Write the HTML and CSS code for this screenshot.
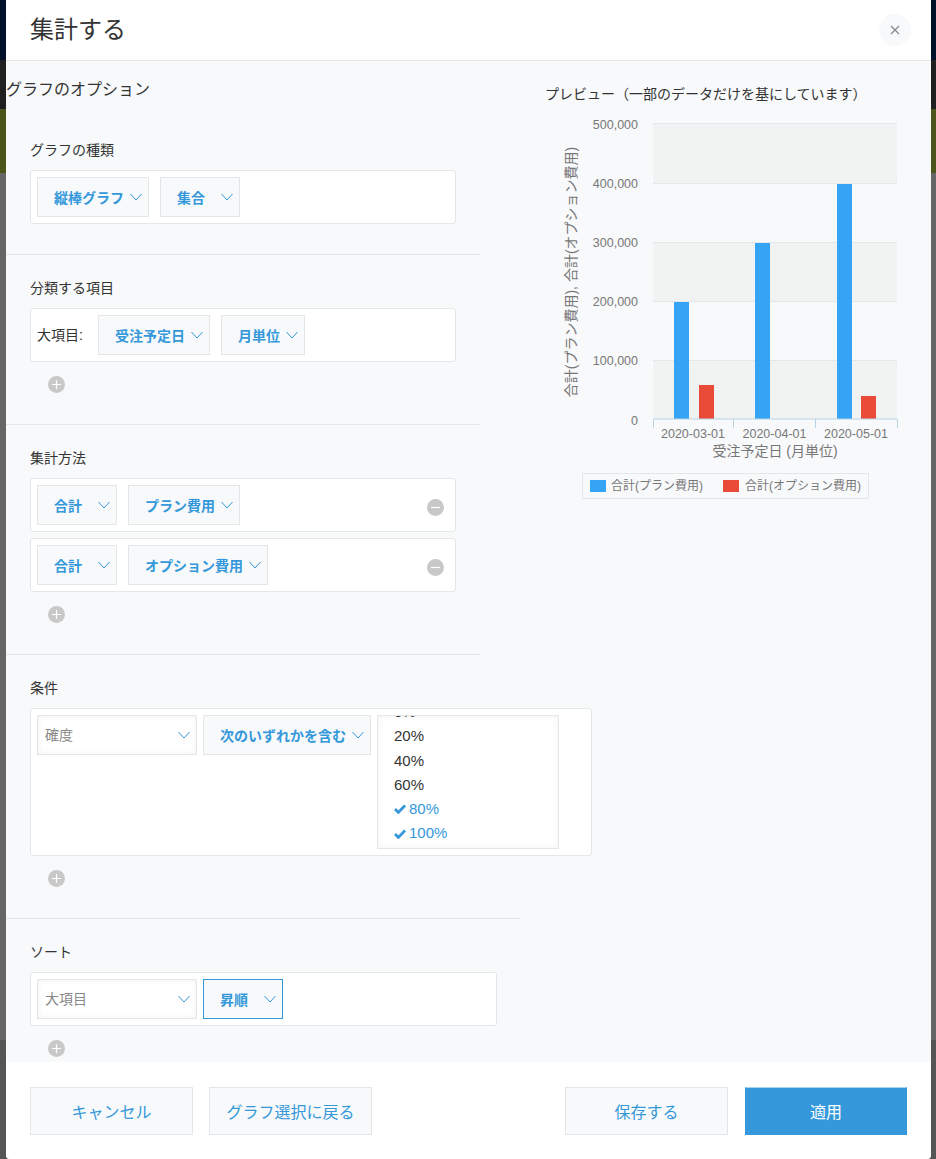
FILE: index.html
```html
<!DOCTYPE html>
<html lang="ja">
<head>
<meta charset="utf-8">
<title>集計する</title>
<link rel="stylesheet" href="styles.css">
</head>
<body>
<svg class="defs" width="0" height="0" aria-hidden="true">
  <symbol id="chev" viewBox="0 0 12 8"><polyline points="0.5,1 6,7 11.5,1" fill="none" stroke="#3498db" stroke-width="1"/></symbol>
  <symbol id="plus" viewBox="0 0 17 17"><circle cx="8.5" cy="8.5" r="8.5" fill="#c8c8c8"/><path d="M8.5 4v9M4 8.5h9" stroke="#fff" stroke-width="1.2"/></symbol>
  <symbol id="minus" viewBox="0 0 17 17"><circle cx="8.5" cy="8.5" r="8.5" fill="#c8c8c8"/><path d="M4 8.5h9" stroke="#fff" stroke-width="1.2"/></symbol>
  <symbol id="check" viewBox="0 0 12 10"><path d="M1 5 4.4 8.4 11 1.4" fill="none" stroke="#3498db" stroke-width="2.8"/></symbol>
</svg>
<div class="modal">
  <header class="head">
    <h1 class="head-title">集計する</h1>
    <button class="close" type="button"><svg width="10" height="10" viewBox="0 0 10 10"><path d="M1 1l8 8M9 1l-8 8" stroke="#888" stroke-width="1.2"/></svg></button>
  </header>
  <main class="body">
    <div class="options">
      <h2 class="options-title">グラフのオプション</h2>

      <section class="section">
        <h3 class="label">グラフの種類</h3>
        <div class="panel">
          <div class="sel"><span>縦棒グラフ</span><svg class="chev"><use href="#chev"/></svg></div>
          <div class="sel"><span>集合</span><svg class="chev"><use href="#chev"/></svg></div>
        </div>
      </section>

      <section class="section">
        <h3 class="label">分類する項目</h3>
        <div class="panel">
          <span class="field-label">大項目:</span>
          <div class="sel"><span>受注予定日</span><svg class="chev"><use href="#chev"/></svg></div>
          <div class="sel"><span>月単位</span><svg class="chev"><use href="#chev"/></svg></div>
        </div>
        <svg class="round add"><use href="#plus"/></svg>
      </section>

      <section class="section">
        <h3 class="label">集計方法</h3>
        <div class="panel">
          <div class="sel"><span>合計</span><svg class="chev"><use href="#chev"/></svg></div>
          <div class="sel"><span>プラン費用</span><svg class="chev"><use href="#chev"/></svg></div>
          <svg class="round remove"><use href="#minus"/></svg>
        </div>
        <div class="panel panel-next">
          <div class="sel"><span>合計</span><svg class="chev"><use href="#chev"/></svg></div>
          <div class="sel"><span>オプション費用</span><svg class="chev"><use href="#chev"/></svg></div>
          <svg class="round remove"><use href="#minus"/></svg>
        </div>
        <svg class="round add"><use href="#plus"/></svg>
      </section>

      <section class="section section-wide">
        <h3 class="label">条件</h3>
        <div class="panel panel-cond">
          <div class="sel sel-plain"><span>確度</span><svg class="chev"><use href="#chev"/></svg></div>
          <div class="sel"><span>次のいずれかを含む</span><svg class="chev"><use href="#chev"/></svg></div>
          <div class="listbox">
            <ul class="list">
              <li>0%</li>
              <li>20%</li>
              <li>40%</li>
              <li>60%</li>
              <li class="on"><svg class="check"><use href="#check"/></svg>80%</li>
              <li class="on"><svg class="check"><use href="#check"/></svg>100%</li>
            </ul>
          </div>
        </div>
        <svg class="round add"><use href="#plus"/></svg>
      </section>

      <section class="section section-wide section-last">
        <h3 class="label">ソート</h3>
        <div class="panel panel-sort">
          <div class="sel sel-plain"><span>大項目</span><svg class="chev"><use href="#chev"/></svg></div>
          <div class="sel sel-focus"><span>昇順</span><svg class="chev"><use href="#chev"/></svg></div>
        </div>
        <svg class="round add"><use href="#plus"/></svg>
      </section>
    </div>

    <aside class="preview">
      <h2 class="preview-title">プレビュー（一部のデータだけを基にしています）</h2>
      <svg class="chart" width="380" height="400" viewBox="545 110 380 400">
        <defs>
          <pattern id="dots" width="8" height="8" patternUnits="userSpaceOnUse"><rect x="3" y="3" width="1" height="1" fill="#e9ebea"/></pattern>
        </defs>
        <rect class="band" x="653" y="123" width="244" height="60"/>
        <rect class="band" x="653" y="242" width="244" height="60"/>
        <rect class="band" x="653" y="360" width="244" height="59"/>
        <rect x="653" y="123" width="244" height="60" fill="url(#dots)"/>
        <rect x="653" y="242" width="244" height="60" fill="url(#dots)"/>
        <rect x="653" y="360" width="244" height="59" fill="url(#dots)"/>
        <g class="grid">
          <path d="M653 123.5H897M653 183.5H897M653 242.5H897M653 301.5H897M653 360.5H897"/>
        </g>
        <rect class="bar-blue" x="674" y="302" width="15" height="117"/>
        <rect class="bar-red" x="699" y="385" width="15" height="34"/>
        <rect class="bar-blue" x="755" y="243" width="15" height="176"/>
        <rect class="bar-blue" x="837" y="184" width="15" height="235"/>
        <rect class="bar-red" x="861" y="396" width="15" height="23"/>
        <path class="ticks" d="M653 419H897M653.5 419v9M733.5 419v9M815.5 419v9M897.5 419v9"/>
        <g class="ylab">
          <text x="638" y="129">500,000</text>
          <text x="638" y="188">400,000</text>
          <text x="638" y="247">300,000</text>
          <text x="638" y="306">200,000</text>
          <text x="638" y="365">100,000</text>
          <text x="638" y="425">0</text>
        </g>
        <g class="xlab">
          <text x="693" y="438">2020-03-01</text>
          <text x="774.5" y="438">2020-04-01</text>
          <text x="856" y="438">2020-05-01</text>
        </g>
        <text class="xtitle" x="775" y="456">受注予定日 (月単位)</text>
        <text class="xtitle" transform="translate(576 272) rotate(-90)">合計(プラン費用), 合計(オプション費用)</text>
        <rect class="legend" x="582.5" y="473.5" width="286" height="25"/>
        <rect class="bar-blue" x="590" y="480" width="16" height="12"/>
        <text class="legend-text" x="611" y="490">合計(プラン費用)</text>
        <rect class="bar-red" x="723" y="480" width="16" height="12"/>
        <text class="legend-text" x="745" y="490">合計(オプション費用)</text>
      </svg>
    </aside>
  </main>
  <footer class="foot">
    <div class="foot-group">
      <button class="btn" type="button">キャンセル</button>
      <button class="btn" type="button">グラフ選択に戻る</button>
    </div>
    <div class="foot-group foot-group-end">
      <button class="btn" type="button">保存する</button>
      <button class="btn btn-primary" type="button">適用</button>
    </div>
  </footer>
</div>
</body>
</html>
```

FILE: styles.css
```css
* { box-sizing: border-box; }
html, body { margin: 0; padding: 0; height: 100%; overflow: hidden; }
body {
  font-family: "Liberation Sans", "Noto Sans CJK JP", sans-serif;
  color: #333;
  background: linear-gradient(to bottom,
    #031029 0, #031029 60px,
    #202020 60px, #202020 109px,
    #4c5419 109px, #4c5419 173px,
    #666 173px, #666 1040px,
    #555 1040px, #555 100%);
}
.defs { position: absolute; }
.modal {
  margin: 0 5px 0 6px;
  height: 1159px;
  display: flex;
  flex-direction: column;
  background: #fff;
  border-radius: 0 0 4px 4px;
  overflow: hidden;
}
.head {
  flex: none;
  height: 61px;
  display: flex;
  align-items: center;
  justify-content: space-between;
  padding: 0 20px 1px 24px;
  border-bottom: 1px solid #e3e7e8;
}
.head-title { margin: 0; font-size: 24px; font-weight: 400; line-height: 32px; }
.close {
  width: 32px; height: 32px; padding: 0;
  border: 0; border-radius: 50%;
  background: #f7f9fa;
  display: flex; align-items: center; justify-content: center;
}
.body {
  flex: 1;
  min-height: 0;
  display: flex;
  overflow: hidden;
  background: #f7f9fa;
}
.options { flex: none; width: 533px; }
.options-title {
  margin: 19px 0 17px;
  font-size: 16px; font-weight: 400; line-height: 20px;
  white-space: nowrap;
}
.section {
  width: 474px;
  padding: 23px 0 30px 24px;
  border-bottom: 1px solid #e3e7e8;
}
.section-wide { width: 515px; }
.section-last { border-bottom: 0; }
.label { margin: 0 0 10px; font-size: 14px; font-weight: 400; line-height: 20px; }
.panel {
  width: 426px;
  display: flex;
  align-items: flex-start;
  gap: 11px;
  padding: 6px;
  background: #fff;
  border: 1px solid #e3e7e8;
  border-radius: 3px;
}
.panel-next { margin-top: 6px; }
.panel-cond { width: 562px; gap: 6px; }
.panel-sort { width: 467px; gap: 6px; }
.field-label { width: 50px; font-size: 14px; line-height: 40px; white-space: nowrap; }
.sel {
  flex: none;
  height: 40px;
  min-width: 80px;
  display: flex;
  align-items: center;
  gap: 6px;
  padding: 0 6px 0 16px;
  background: #f7f9fa;
  border: 1px solid #e3e7e8;
  color: #3498db;
  font-size: 14px;
  font-weight: 700;
  white-space: nowrap;
}
.sel .chev { width: 12px; height: 8px; flex: none; margin-left: auto; }
.sel-plain {
  width: 160px;
  padding-left: 7px;
  background: #fff;
  box-shadow: inset 0 0 6px #f0f1f1;
  color: #888;
  font-weight: 400;
}
.sel-plain span { margin-top: -3px; }
.sel-focus { border-color: #3498db; }
.listbox {
  flex: none;
  width: 182px;
  height: 134px;
  overflow: hidden;
  background: #fff;
  border: 1px solid #e3e7e8;
  box-shadow: inset 0 0 6px #f0f1f1;
}
.list { margin: -16px 0 0; padding: 0 0 0 16px; list-style: none; font-size: 15px; line-height: 24.3px; }
.list .on { color: #3498db; display: flex; align-items: center; gap: 3px; }
.check { width: 12px; height: 10px; flex: none; }
.round { display: block; width: 17px; height: 17px; flex: none; }
.add { margin: 14px 0 1px 18px; }
.remove { margin: 14px 5px 0 auto; }
.preview { flex: 1; min-width: 0; padding: 23px 0 0 6px; }
.preview-title {
  margin: 0 0 6px;
  font-size: 14px; font-weight: 400; line-height: 20px;
  white-space: nowrap;
}
.chart { display: block; }
.band { fill: #f1f3f2; }
.grid path { stroke: #e3e6ea; stroke-width: 1; fill: none; }
.bar-blue { fill: #35a4f5; }
.bar-red { fill: #e94b38; }
.ticks { stroke: #b9d3e6; stroke-width: 1; fill: none; }
.ylab text { font-size: 12.5px; fill: #777; text-anchor: end; }
.xlab text { font-size: 12.5px; fill: #777; text-anchor: middle; }
.xtitle { font-size: 14px; fill: #777; text-anchor: middle; }
.legend { fill: none; stroke: #e3e7e8; stroke-width: 1; }
.legend-text { font-size: 12px; fill: #777; }
.foot {
  flex: none;
  height: 97px;
  display: flex;
  justify-content: space-between;
  padding: 25px 24px 0;
  background: #fff;
}
.foot-group { display: flex; gap: 16px; align-items: flex-start; }
.foot-group-end { gap: 17px; }
.btn {
  width: 163px; height: 48px;
  background: #f7f9fa;
  border: 1px solid #e3e7e8;
  color: #3498db;
  font: inherit;
  font-size: 16px;
  padding: 0;
}
.btn-primary { width: 162px; background: #3498db; color: #fff; border-color: #3498db; border-top-color: #a9d3ef; }
```
